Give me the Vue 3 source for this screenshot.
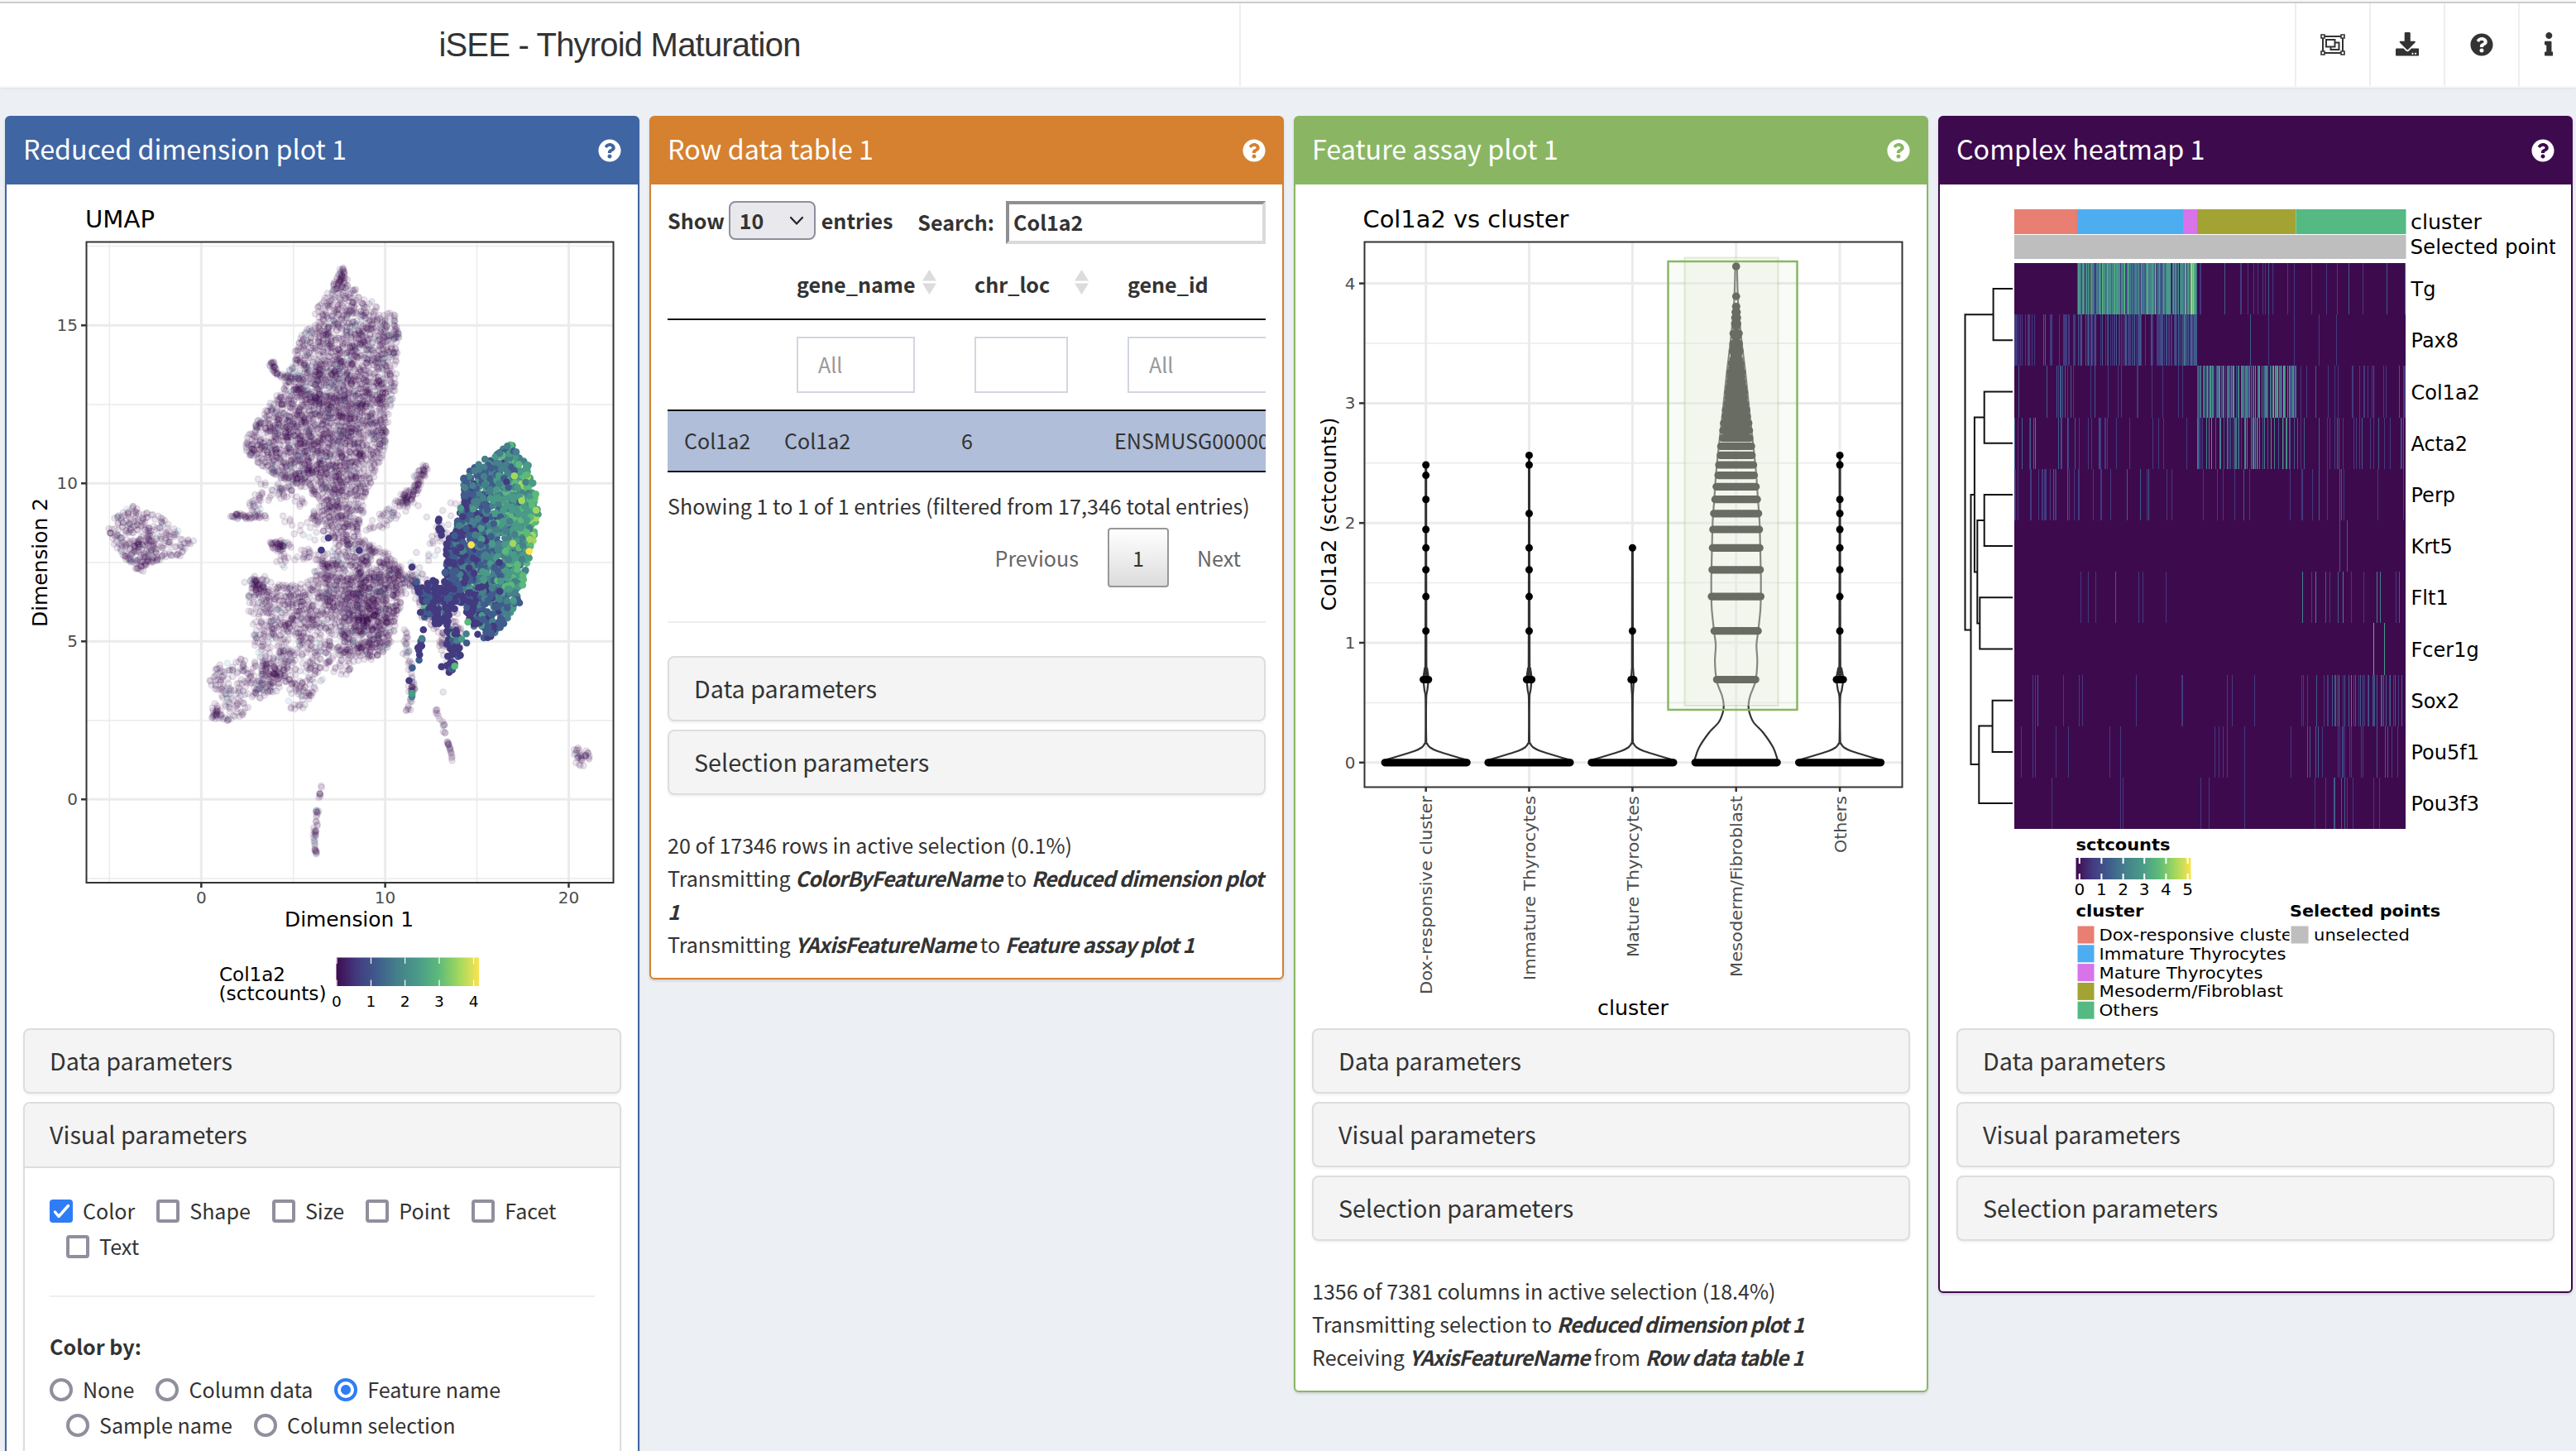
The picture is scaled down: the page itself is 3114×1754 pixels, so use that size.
<script setup>
// ---------- deterministic random source ----------
function rng(seed) {
  let s = seed >>> 0
  return () => {
    s = (s + 0x6d2b79f5) >>> 0
    let t = s
    t = Math.imul(t ^ (t >>> 15), t | 1)
    t ^= t + Math.imul(t ^ (t >>> 7), t | 61)
    return ((t ^ (t >>> 14)) >>> 0) / 4294967296
  }
}
const round = (v) => Math.round(v * 10) / 10
const viridis = ['#3f0b4f', '#433a80', '#3f5c8c', '#45808b', '#4a9a88', '#5bb97b', '#a0d75f', '#fae350']

// ---------- UMAP ----------
const r1 = rng(42)
const gauss = () => (r1() + r1() + r1() + r1() - 2) * 0.85
const toPage = (x, y) => [round(x / 2.0103), round(230 + y / 2.529)]
function inside(poly, x, y) {
  let hit = false
  for (let i = 0, j = poly.length - 1; i < poly.length; j = i++) {
    const [xi, yi] = poly[i]
    const [xj, yj] = poly[j]
    if (yi > y !== yj > y && x < ((xj - xi) * (y - yi)) / (yj - yi) + xi) hit = !hit
  }
  return hit
}
function fillPoly(poly, n) {
  const xs = poly.map((p) => p[0])
  const ys = poly.map((p) => p[1])
  const x0 = Math.min(...xs), x1 = Math.max(...xs)
  const y0 = Math.min(...ys), y1 = Math.max(...ys)
  const out = []
  while (out.length < n) {
    const x = x0 + r1() * (x1 - x0)
    const y = y0 + r1() * (y1 - y0)
    if (inside(poly, x, y)) out.push([x, y])
  }
  return out
}
function blob(cx, cy, sx, sy, n, poly) {
  const out = []
  let guard = 0
  while (out.length < n && guard++ < n * 20) {
    const x = cx + gauss() * sx
    const y = cy + gauss() * sy
    if (!poly || inside(poly, x, y)) out.push([x, y])
  }
  return out
}
function streak(pts, spread, n) {
  const out = []
  for (let i = 0; i < n; i++) {
    const t = r1() * (pts.length - 1)
    const k = Math.floor(t)
    const f = t - k
    out.push([
      pts[k][0] + (pts[k + 1][0] - pts[k][0]) * f + gauss() * spread,
      pts[k][1] + (pts[k + 1][1] - pts[k][1]) * f + gauss() * spread
    ])
  }
  return out
}
const upper = [[833, 244], [850, 285], [880, 318], [920, 355], [962, 380], [970, 450], [970, 530], [962, 610], [945, 690], [935, 790], [915, 860], [890, 930], [880, 985], [800, 975], [760, 930], [720, 900], [680, 880], [630, 840], [596, 800], [600, 750], [640, 680], [665, 635], [690, 600], [680, 575], [715, 530], [715, 480], [740, 430], [775, 400], [762, 370], [790, 320], [810, 285], [825, 250]]
const middle = [[820, 1080], [900, 1080], [945, 1110], [970, 1150], [980, 1200], [975, 1270], [960, 1340], [945, 1400], [910, 1435], [860, 1440], [845, 1485], [800, 1470], [770, 1520], [735, 1590], [700, 1590], [702, 1480], [660, 1530], [610, 1560], [640, 1450], [620, 1400], [610, 1320], [600, 1260], [610, 1190], [650, 1190], [700, 1210], [760, 1190], [770, 1130]]
const lowerLeft = [[525, 1450], [580, 1430], [640, 1440], [680, 1450], [700, 1480], [680, 1520], [640, 1550], [612, 1570], [605, 1605], [570, 1612], [552, 1632], [520, 1605], [514, 1590], [525, 1560], [505, 1500]]
const island = [[325, 965], [370, 985], [410, 1010], [440, 1050], [468, 1072], [440, 1120], [400, 1130], [365, 1140], [345, 1170], [310, 1140], [285, 1110], [262, 1035], [275, 990]]
const faintRaw = [
  ...fillPoly(upper, 2050),
  ...blob(760, 790, 230, 260, 560, upper),
  ...blob(840, 570, 210, 300, 480, upper),
  ...streak([[833, 240], [830, 265], [822, 300]], 8, 20),
  ...streak([[660, 522], [672, 560], [735, 575]], 8, 44),
  ...fillPoly([[770, 960], [885, 975], [870, 1050], [905, 1090], [820, 1090], [790, 1050], [750, 1000]], 180),
  ...fillPoly(middle, 1150),
  ...blob(905, 1310, 85, 150, 400, middle),
  ...blob(860, 1160, 150, 120, 220, middle),
  ...blob(730, 1260, 150, 160, 160, middle),
  ...fillPoly(lowerLeft, 200),
  ...blob(670, 1480, 50, 55, 60),
  ...blob(522, 1602, 12, 22, 14),
  ...fillPoly(island, 280),
  ...blob(342, 1115, 50, 70, 60, island),
  ...streak([[566, 991], [600, 1000], [645, 995]], 9, 44),
  ...streak([[600, 990], [630, 950], [665, 925], [710, 905]], 26, 45),
  ...streak([[640, 880], [690, 930], [750, 960]], 26, 22),
  ...streak([[670, 1010], [760, 1040], [800, 1000]], 34, 30),
  ...streak([[655, 1080], [700, 1085]], 12, 36),
  ...streak([[680, 1090], [690, 1145]], 16, 20),
  ...streak([[730, 1130], [780, 1100]], 28, 20),
  ...streak([[620, 1190], [640, 1240]], 26, 50),
  ...streak([[1034, 845], [1018, 885], [1000, 930]], 10, 54),
  ...streak([[1000, 930], [975, 960]], 22, 54),
  ...streak([[970, 965], [930, 1005], [890, 1040]], 28, 34),
  ...streak([[960, 1170], [1010, 1200], [1060, 1260]], 34, 100),
  ...streak([[1110, 940], [1080, 1020], [1050, 1090], [1010, 1160]], 30, 34),
  ...fillPoly([[1000, 1200], [1100, 1230], [1120, 1330], [1120, 1440], [1080, 1470], [1060, 1350], [1010, 1290]], 150),
  ...streak([[985, 1325], [987, 1400], [1003, 1510], [1000, 1540], [990, 1598]], 8, 60),
  ...streak([[1060, 1586], [1072, 1620], [1085, 1660]], 6, 15),
  ...streak([[1088, 1680], [1094, 1710], [1099, 1748]], 4, 17),
  ...streak([[781, 1817], [776, 1860]], 2, 8),
  ...streak([[770, 1892], [767, 1950], [764, 1990], [770, 2030]], 4, 38),
  ...streak([[1400, 1702], [1412, 1735], [1416, 1755]], 11, 22),
  ...blob(1425, 1725, 8, 18, 10),
  [470, 1072], [1077, 1534], [1037, 999]
]
const faint = faintRaw.map(([x, y]) => {
  const [px, py] = toPage(x, y)
  return { x: px, y: py, c: r1() < 0.045 ? '#3f7f95' : '#3f0b4f' }
})
const body = [[1245, 775], [1285, 840], [1298, 920], [1308, 990], [1295, 1080], [1288, 1130], [1278, 1200], [1265, 1260], [1235, 1310], [1190, 1378], [1150, 1350], [1130, 1290], [1080, 1235], [1080, 1160], [1085, 1080], [1110, 1010], [1125, 940], [1120, 880], [1160, 840], [1200, 800]]
const bold = []
for (const [x, y] of fillPoly(body, 1350)) {
  let v = ((x - 1100) / 190) * 3.3 + 1.3 + gauss() * 1.8
  if (y > 1220) v -= 0.9
  if (y < 870) v -= 0.4
  const i = Math.max(1, Math.min(6, Math.round(v)))
  const [px, py] = toPage(x, y)
  bold.push({ x: px, y: py, c: viridis[i] })
}
for (const [x, y] of [
  ...fillPoly([[1010, 1195], [1100, 1190], [1115, 1270], [1060, 1340], [1020, 1290]], 105),
  ...fillPoly([[1085, 1310], [1112, 1330], [1120, 1440], [1093, 1485], [1072, 1460], [1085, 1390]], 52),
  ...streak([[1030, 1340], [1022, 1400], [1010, 1455]], 5, 11),
  ...streak([[1065, 1000], [1070, 1060]], 8, 9)
]) {
  const [px, py] = toPage(x, y)
  const q = r1()
  bold.push({ x: px, y: py, c: viridis[q < 0.72 ? 1 : q < 0.9 ? 2 : q < 0.97 ? 3 : 5] })
}
for (const [x, y, i] of [[798, 1063, 1], [781, 1100, 1], [873, 1101, 1], [1001, 1152, 1], [1002, 1460, 2], [994, 1499, 1], [1001, 1548, 3], [1001, 1538, 4], [1250, 873, 6], [1303, 978, 6], [1145, 1084, 7], [1286, 1104, 7], [1133, 1356, 3], [1122, 1372, 4], [1134, 1384, 2], [1105, 1455, 5], [1137, 1320, 5], [1295, 895, 4], [1302, 929, 5]]) {
  const [px, py] = toPage(x, y)
  bold.push({ x: px, y: py, c: viridis[i] })
}
const umapV = [{ x: 132.3, m: 1 }, { x: 354.7, m: 1 }, { x: 576.5, m: 1 }, { x: 243.3, t: '0' }, { x: 465.6, t: '10' }, { x: 687.5, t: '20' }]
const umapH = [{ y: 297.6, m: 1 }, { y: 489, m: 1 }, { y: 680, m: 1 }, { y: 871, m: 1 }, { y: 1062, m: 1 }, { y: 393.3, t: '15' }, { y: 584.3, t: '10' }, { y: 775.3, t: '5' }, { y: 966.3, t: '0' }]
const umapKey = [407, 448.5, 489.6, 531, 572.6]

// ---------- violin plot ----------
const vy = (v) => round(921.8 - 144.8 * v)
const groups = [
  { x: 1723.7, name: 'Dox-responsive cluster', len: 240, bump: 3, dots: [1.099, 1.386, 1.609, 1.792, 1.946, 2.197, 2.398, 2.485] },
  { x: 1848.5, name: 'Immature Thyrocytes', len: 223, bump: 3, dots: [1.099, 1.386, 1.609, 1.792, 2.079, 2.485, 2.565] },
  { x: 1973.4, name: 'Mature Thyrocytes', len: 195, bump: 1.5, dots: [1.099, 1.792] },
  { x: 2098.7, name: 'Mesoderm/Fibroblast', len: 219 },
  { x: 2224.1, name: 'Others', len: 69, bump: 4, dots: [1.099, 1.386, 1.609, 1.792, 1.946, 2.079, 2.197, 2.485, 2.565] }
]
const thin = groups.filter((g) => g.dots)
function smooth(p) {
  let d = `M${p[0][0]},${p[0][1]}`
  for (let i = 0; i < p.length - 1; i++) {
    const a = p[i - 1] || p[i], b = p[i], c = p[i + 1], e = p[i + 2] || c
    d += `C${round(b[0] + (c[0] - a[0]) / 6)},${round(b[1] + (c[1] - a[1]) / 6)} ${round(c[0] - (e[0] - b[0]) / 6)},${round(c[1] - (e[1] - b[1]) / 6)} ${c[0]},${c[1]}`
  }
  return d
}
const thinProfile = (g) => [[49, 918.6], [30, 913], [14, 908], [5, 903.5], [1.5, 899], [0.4, 893], [0.4, 845], [g.bump * 0.6, 834], [g.bump, 820], [g.bump * 0.5, 808], [0.6, 795], [0.4, vy(g.dots[g.dots.length - 1])]]
const fatProfile = [[50, 918], [45, 904], [33, 886], [21, 873], [16, 861], [15, 852], [17, 841], [23.5, 823], [25.6, 800], [24.6, 780], [26.5, 764], [29.5, 735], [30, 704], [29.3, 668], [28.3, 630], [26.4, 604], [23.4, 563], [16.4, 500], [11.4, 452], [6.5, 411], [2.5, 367], [1, 322]]
const side = (g, prof, s) => smooth(prof.map(([dx, y]) => [round(g.x + s * dx), y]))
const fatRows = [[0.693, 28], [1.099, 31], [1.386, 34.3], [1.609, 33.5], [1.792, 33], [1.946, 32.5], [2.079, 31.5], [2.197, 30], [2.303, 28.5], [2.398, 26.3], [2.485, 25.4], [2.565, 23.6], [2.64, 23], [2.708, 20.8], [2.773, 20.4], [2.833, 19.6], [2.89, 17.8], [2.944, 17.2], [2.996, 15.6], [3.045, 14.2], [3.091, 14.4], [3.135, 13.2], [3.178, 12], [3.219, 11.2], [3.258, 11.8], [3.296, 9.6], [3.332, 10], [3.367, 8.2], [3.401, 7], [3.434, 9], [3.466, 7.4], [3.497, 8.2], [3.555, 6], [3.583, 8], [3.64, 5], [3.664, 6.2], [3.714, 6], [3.761, 5.6], [3.807, 5], [3.892, 4.8], [4.143, 4.8]]
const violinMajor = [0, 1, 2, 3, 4]
const violinMinor = [0.5, 1.5, 2.5, 3.5]

// ---------- heatmap ----------
const r2 = rng(7)
const segs = [
  { x: 2435, w: 76, c: '#e97e72', n: 'Dox-responsive cluster', len: 0 },
  { x: 2511, w: 128, c: '#4cadf1', n: 'Immature Thyrocytes', len: 224 },
  { x: 2639, w: 17, c: '#d873ea', n: 'Mature Thyrocytes', len: 196 },
  { x: 2656, w: 119.5, c: '#a3a333', n: 'Mesoderm/Fibroblast', len: 220.5 },
  { x: 2775.5, w: 133, c: '#54b982', n: 'Others', len: 70 }
]
// per gene: density of expressing cells and mean level in each cluster
const genes = [
  { n: 'Tg', d: [0, 0.97, 1, 0.11, 0.04], l: [0, 3, 4.2, 1.2, 1.4] },
  { n: 'Pax8', d: [0.4, 0.58, 0.85, 0.01, 0.03], l: [1, 1.4, 1.7, 1, 1] },
  { n: 'Col1a2', d: [0.07, 0.05, 0.05, 0.72, 0.09], l: [1.6, 1, 1, 2.9, 1.2] },
  { n: 'Acta2', d: [0.14, 0.07, 0.12, 0.4, 0.25], l: [1.7, 1, 1.2, 2.5, 1.9] },
  { n: 'Perp', d: [0.22, 0.1, 0.03, 0.04, 0.12], l: [1, 1.1, 1, 1, 1.2] },
  { n: 'Krt5', d: [0, 0, 0, 0, 0], l: [0, 0, 0, 0, 0], at: [[2828.5, 2], [2837.5, 2]] },
  { n: 'Flt1', d: [0.02, 0.04, 0.01, 0.01, 0.1], l: [1, 1, 1, 1, 1.8] },
  { n: 'Fcer1g', d: [0, 0, 0, 0, 0], l: [0, 0, 0, 0, 0], at: [[2869.5, 5], [2882.5, 4]] },
  { n: 'Sox2', d: [0.06, 0.01, 0.05, 0.03, 0.3], l: [1, 1, 1, 1, 1.5] },
  { n: 'Pou5f1', d: [0.05, 0.01, 0, 0.03, 0.11], l: [1, 1, 1, 1, 1.6] },
  { n: 'Pou3f3', d: [0.01, 0.01, 0, 0.02, 0.07], l: [1, 1, 1, 1, 1.3] }
]
const rowH = 62.2
const rowMid = (i) => round(318 + rowH * (i + 0.5))
const stripes = []
genes.forEach((g, gi) => {
  const byLevel = {}
  segs.forEach((s, si) => {
    for (let x = Math.round(s.x); x < Math.min(s.x + s.w, 2908); x++) {
      if (r2() > g.d[si]) continue
      const v = Math.max(1, Math.min(6, Math.round(g.l[si] + (r2() + r2() - 1) * g.l[si] * 0.85)))
      ;(byLevel[v] = byLevel[v] || []).push(x + 0.5)
    }
  })
  for (const [x, v] of g.at || []) (byLevel[v] = byLevel[v] || []).push(x)
  const y0 = Math.round(318 + gi * rowH), y1 = Math.round(318 + (gi + 1) * rowH)
  for (const v in byLevel) stripes.push({ c: viridis[v], d: byLevel[v].map((x) => `M${x},${y0}V${y1}`).join('') })
})
const R = rowMid
const tree = [
  `M2433,${R(0)}H2409.6V${R(1)}H2433`,
  `M2433,${R(2)}H2398.7V${R(3)}H2433`,
  `M2433,${R(4)}H2398.7V${R(5)}H2433`,
  `M2433,${R(6)}H2393.3V${R(7)}H2433`,
  `M2433,${R(8)}H2408.6V${R(9)}H2433`,
  `M2398.7,629H2390.3V753.6H2393.3`,
  `M2398.7,504.5H2386.9V691.5H2390.3`,
  `M2408.6,877.5H2392.3V${R(10)}H2433`,
  `M2386.9,598H2382.5V924H2392.3`,
  `M2409.6,380.3H2375.5V761.4H2382.5`
].join('')
const heatKey = [2513.8, 2540.4, 2566.6, 2592.2, 2618.4, 2644.6]

// ---------- controls ----------
const threeBoxes = ['Data parameters', 'Visual parameters', 'Selection parameters']
const checks = [['Color', 'Shape', 'Size', 'Point', 'Facet'], ['Text']]
const radios = [['None', 'Column data', 'Feature name'], ['Sample name', 'Column selection']]
const QUESTION = 'M504 256c0 136.997-111.043 248-248 248S8 392.997 8 256C8 119.083 119.043 8 256 8s248 111.083 248 248zM262.655 90c-54.497 0-89.255 22.957-116.549 63.758-3.536 5.286-2.353 12.415 2.715 16.258l34.699 26.31c5.205 3.947 12.621 3.008 16.665-2.122 17.864-22.658 30.113-35.797 57.303-35.797 20.429 0 45.698 13.148 45.698 32.958 0 14.976-12.363 22.667-32.534 33.976C247.128 238.528 216 254.941 216 296v4c0 6.627 5.373 12 12 12h56c6.627 0 12-5.373 12-12v-1.333c0-28.462 83.186-29.647 83.186-106.667 0-58.002-60.165-102-116.531-102zM256 338c-25.365 0-46 20.635-46 46 0 25.364 20.635 46 46 46s46-20.636 46-46c0-25.365-20.635-46-46-46z'
</script>

<template>
  <div class="app">
    <header class="top">
      <div class="brand">iSEE - Thyroid Maturation</div>
      <nav class="tools">
        <a class="tool">
          <svg width="30" height="26" viewBox="0 0 30 26" fill="none" stroke="#333" stroke-width="2">
            <path d="M3 3H27V23H3Z" />
            <path d="M7 7H17.500V15.500H7Z M18.500 10.500H22.500V19H12.500V16.500" />
            <path d="M1 1H5V5H1ZM25 1H29V5H25ZM1 21H5V25H1ZM25 21H29V25H25Z" fill="#fff" stroke-width="1.600" />
          </svg>
        </a>
        <a class="tool">
          <svg width="28.500" height="28.500" viewBox="0 0 512 512" fill="#333"><path d="M216 0h80c13.300 0 24 10.700 24 24v168h87.700c17.800 0 26.700 21.500 14.100 34.100L269.700 378.300c-7.500 7.500-19.800 7.500-27.300 0L90.100 226.100c-12.600-12.600-3.700-34.100 14.100-34.100H192V24c0-13.300 10.700-24 24-24zm296 376v112c0 13.300-10.700 24-24 24H24c-13.300 0-24-10.700-24-24V376c0-13.300 10.700-24 24-24h146.700l49 49c20.100 20.100 52.500 20.100 72.600 0l49-49H488c13.300 0 24 10.700 24 24zm-124 88c0-11-9-20-20-20s-20 9-20 20 9 20 20 20 20-9 20-20zm64 0c0-11-9-20-20-20s-20 9-20 20 9 20 20 20 20-9 20-20z" /></svg>
        </a>
        <a class="tool">
          <svg width="28" height="28" viewBox="0 0 512 512" fill="#333"><path :d="QUESTION" /></svg>
        </a>
        <a class="tool last">
          <svg width="10.700" height="28.500" viewBox="0 0 192 512" fill="#333"><path d="M20 424.229h20V279.771H20c-11.046 0-20-8.954-20-20V212c0-11.046 8.954-20 20-20h112c11.046 0 20 8.954 20 20v212.229h20c11.046 0 20 8.954 20 20V492c0 11.046-8.954 20-20 20H20c-11.046 0-20-8.954-20-20v-47.771c0-11.046 8.954-20 20-20zM96 0C56.235 0 24 32.235 24 72s32.235 72 72 72 72-32.235 72-72S135.764 0 96 0z" /></svg>
        </a>
      </nav>
    </header>

    <main class="grid">
      <!-- Reduced dimension plot -->
      <section class="panel blue">
        <div class="head"><span>Reduced dimension plot 1</span><svg width="28" height="28" viewBox="0 0 512 512" fill="#fff"><path :d="QUESTION" /></svg></div>
        <div class="body">
          <svg class="plot" width="723" height="1000" viewBox="28 243 723 1000">
            <defs>
              <linearGradient id="vir">
                <stop v-for="(c, i) in viridis" :key="i" :offset="i / 7" :stop-color="c" />
              </linearGradient>
            </defs>
            <text x="103" y="275" font-size="28" textLength="84" lengthAdjust="spacingAndGlyphs">UMAP</text>
            <g stroke="#ebebeb">
              <line v-for="g in umapV" :key="g.x" :x1="g.x" :x2="g.x" y1="292" y2="1067" :stroke-width="g.m ? 1.5 : 3" />
              <line v-for="g in umapH" :key="g.y" :y1="g.y" :y2="g.y" x1="104" x2="741" :stroke-width="g.m ? 1.5 : 3" />
            </g>
            <g fill-opacity="0.1" stroke-opacity="0.1" stroke-width="1.6">
              <circle v-for="(p, i) in faint" :key="i" :cx="p.x" :cy="p.y" r="3.6" :fill="p.c" :stroke="p.c" />
            </g>
            <circle v-for="(p, i) in bold" :key="'b' + i" :cx="p.x" :cy="p.y" r="4.3" :fill="p.c" />
            <rect x="104.500" y="292.500" width="637" height="774.500" fill="none" stroke="#333" stroke-width="2" />
            <g fill="#4d4d4d" font-size="20">
              <template v-for="g in umapV" :key="'t' + g.x">
                <line v-if="g.t" :x1="g.x" :x2="g.x" y1="1067" y2="1073" stroke="#333" stroke-width="2.500" />
                <text v-if="g.t" :x="g.x" y="1092" text-anchor="middle">{{ g.t }}</text>
              </template>
              <template v-for="g in umapH" :key="'t' + g.y">
                <line v-if="g.t" :y1="g.y" :y2="g.y" x1="98" x2="104" stroke="#333" stroke-width="2.500" />
                <text v-if="g.t" x="94" :y="g.y + 7" text-anchor="end">{{ g.t }}</text>
              </template>
            </g>
            <text x="422" y="1120" font-size="24" text-anchor="middle" textLength="156" lengthAdjust="spacingAndGlyphs">Dimension 1</text>
            <text transform="translate(56.500 680) rotate(-90)" font-size="24" text-anchor="middle" textLength="156" lengthAdjust="spacingAndGlyphs">Dimension 2</text>
            <text x="265" y="1186" font-size="23" textLength="80" lengthAdjust="spacingAndGlyphs">Col1a2</text>
            <text x="264.500" y="1209" font-size="23" textLength="130" lengthAdjust="spacingAndGlyphs">(sctcounts)</text>
            <rect x="406.500" y="1157.500" width="172.500" height="34.500" fill="url(#vir)" />
            <g v-for="(x, i) in umapKey" :key="x">
              <path :d="`M${x},1157.500v7.500M${x},1192v-7.500`" stroke="#fff" stroke-width="1.200" />
              <text :x="x" y="1216.500" font-size="18.500" text-anchor="middle">{{ i }}</text>
            </g>
          </svg>
          <div class="box"><div class="bar">Data parameters</div></div>
          <div class="box open">
            <div class="bar">Visual parameters</div>
            <div class="form">
              <div v-for="(row, i) in checks" :key="i" class="opts" :class="{ wrap: i }">
                <label v-for="c in row" :key="c" class="opt">
                  <span class="check" :class="{ on: c === 'Color' }"><svg v-if="c === 'Color'" width="28" height="28" viewBox="0 0 28 28"><path d="M6.500 15L11 20.500L22.500 7.500" fill="none" stroke="#fff" stroke-width="3.400" stroke-linecap="round" stroke-linejoin="round" /></svg></span>{{ c }}
                </label>
              </div>
              <hr />
              <div class="by">Color by:</div>
              <div v-for="(row, i) in radios" :key="'r' + i" class="opts" :class="{ wrap: i }">
                <label v-for="c in row" :key="c" class="opt">
                  <span class="radio" :class="{ on: c === 'Feature name' }"></span>{{ c }}
                </label>
              </div>
            </div>
          </div>
        </div>
      </section>

      <!-- Row data table -->
      <section class="panel orange">
        <div class="head"><span>Row data table 1</span><svg width="28" height="28" viewBox="0 0 512 512" fill="#fff"><path :d="QUESTION" /></svg></div>
        <div class="body">
          <div class="controls">
            <span>Show</span>
            <span class="select">10<svg width="18" height="12" viewBox="0 0 18 12" fill="none" stroke="#222" stroke-width="2.200" stroke-linecap="round"><path d="M2 2L9 9.500L16 2" /></svg></span>
            <span>entries</span>
            <span class="search">Search:</span>
            <span class="input">Col1a2</span>
          </div>
          <div class="table">
            <div class="tr th">
              <div class="c0"></div>
              <div class="c1">gene_name<svg class="sort" width="17" height="30" viewBox="0 0 17 30" fill="#dcdcdc"><path d="M8.500 0L17 13.500H0ZM0 16.500H17L8.500 30Z" /></svg></div>
              <div class="c2">chr_loc<svg class="sort" width="17" height="30" viewBox="0 0 17 30" fill="#dcdcdc"><path d="M8.500 0L17 13.500H0ZM0 16.500H17L8.500 30Z" /></svg></div>
              <div class="c3">gene_id</div>
            </div>
            <div class="tr filters">
              <div class="c0"></div>
              <div class="c1"><span class="filter f1">All</span></div>
              <div class="c2"><span class="filter f2"></span></div>
              <div class="c3"><span class="filter f3">All</span></div>
            </div>
            <div class="tr data">
              <div class="d0">Col1a2</div>
              <div class="d1">Col1a2</div>
              <div class="d2">6</div>
              <div class="d3">ENSMUSG00000</div>
            </div>
          </div>
          <div class="showing">Showing 1 to 1 of 1 entries (filtered from 17,346 total entries)</div>
          <div class="pager"><span>Previous</span><b class="page">1</b><span>Next</span></div>
          <hr class="rule" />
          <div class="box"><div class="bar">Data parameters</div></div>
          <div class="box"><div class="bar">Selection parameters</div></div>
          <div class="info">
            20 of 17346 rows in active selection (0.1%)<br />
            Transmitting <b><i>ColorByFeatureName</i></b> to <b><i>Reduced dimension plot<br />1</i></b><br />
            Transmitting <b><i>YAxisFeatureName</i></b> to <b><i>Feature assay plot 1</i></b>
          </div>
        </div>
      </section>

      <!-- Feature assay plot -->
      <section class="panel green">
        <div class="head"><span>Feature assay plot 1</span><svg width="28" height="28" viewBox="0 0 512 512" fill="#fff"><path :d="QUESTION" /></svg></div>
        <div class="body">
          <svg class="plot" width="723" height="1000" viewBox="1586 243 723 1000">
            <text x="1647.500" y="275" font-size="28" textLength="249" lengthAdjust="spacingAndGlyphs">Col1a2 vs cluster</text>
            <g stroke="#ebebeb" stroke-width="3">
              <line v-for="g in groups" :key="g.x" :x1="g.x" :x2="g.x" y1="292" y2="951" />
              <line v-for="v in violinMajor" :key="v" x1="1649" x2="2299" :y1="vy(v)" :y2="vy(v)" />
              <line v-for="v in violinMinor" :key="v" x1="1649" x2="2299" :y1="vy(v)" :y2="vy(v)" stroke-width="1.500" />
            </g>
            <g fill="none" stroke="#333" stroke-width="2.200">
              <template v-for="g in thin" :key="g.x">
                <path :d="side(g, thinProfile(g), 1)" />
                <path :d="side(g, thinProfile(g), -1)" />
              </template>
              <path :d="side(groups[3], fatProfile, 1)" />
              <path :d="side(groups[3], fatProfile, -1)" />
            </g>
            <g stroke="#000" stroke-width="9.200" stroke-linecap="round">
              <line v-for="g in groups" :key="g.x" :x1="g.x - 49.500" :x2="g.x + 49.500" :y1="vy(0)" :y2="vy(0)" />
              <template v-for="g in thin" :key="'d' + g.x">
                <line :x1="g.x - g.bump" :x2="g.x + g.bump" :y1="vy(0.693)" :y2="vy(0.693)" />
                <circle v-for="v in g.dots" :key="v" :cx="g.x" :cy="vy(v)" r="4.500" stroke="none" />
              </template>
              <line v-for="r in fatRows" :key="r[0]" :x1="groups[3].x - r[1] + 4.600" :x2="groups[3].x + r[1] - 4.500" :y1="vy(r[0])" :y2="vy(r[0])" />
            </g>
            <rect x="1649.500" y="292.500" width="650" height="659" fill="none" stroke="#333" stroke-width="2" />
            <rect x="2036.500" y="311.500" width="113" height="541.500" fill="#eff4e8" fill-opacity="0.430" stroke="#8ab663" stroke-opacity="0.250" stroke-width="2" />
            <rect x="2016.500" y="316" width="156" height="542" fill="#8ab663" fill-opacity="0.050" stroke="#8ab663" stroke-width="2.500" />
            <g fill="#4d4d4d" font-size="20">
              <template v-for="v in violinMajor" :key="'l' + v">
                <line x1="1643" x2="1649" :y1="vy(v)" :y2="vy(v)" stroke="#333" stroke-width="2.500" />
                <text x="1638.500" :y="vy(v) + 7" text-anchor="end">{{ v }}</text>
              </template>
              <template v-for="g in groups" :key="'n' + g.x">
                <line :x1="g.x" :x2="g.x" y1="951" y2="957" stroke="#333" stroke-width="2.500" />
                <text :transform="`translate(${g.x + 7.500} 962) rotate(-90)`" text-anchor="end" :textLength="g.len" lengthAdjust="spacingAndGlyphs">{{ g.name }}</text>
              </template>
            </g>
            <text transform="translate(1614.500 621.500) rotate(-90)" font-size="24" text-anchor="middle" textLength="234" lengthAdjust="spacingAndGlyphs">Col1a2 (sctcounts)</text>
            <text x="1974" y="1226.500" font-size="24" text-anchor="middle" textLength="86" lengthAdjust="spacingAndGlyphs">cluster</text>
          </svg>
          <div v-for="b in threeBoxes" :key="b" class="box"><div class="bar">{{ b }}</div></div>
          <div class="info">
            1356 of 7381 columns in active selection (18.4%)<br />
            Transmitting selection to <b><i>Reduced dimension plot 1</i></b><br />
            Receiving <b><i>YAxisFeatureName</i></b> from <b><i>Row data table 1</i></b>
          </div>
        </div>
      </section>

      <!-- Complex heatmap -->
      <section class="panel purple">
        <div class="head"><span>Complex heatmap 1</span><svg width="28" height="28" viewBox="0 0 512 512" fill="#fff"><path :d="QUESTION" /></svg></div>
        <div class="body">
          <svg class="plot" width="724" height="1000" viewBox="2365 243 724 1000">
            <rect v-for="s in segs" :key="s.x" :x="s.x" y="253" :width="s.w" height="30" :fill="s.c" />
            <rect x="2435" y="284" width="473.500" height="29" fill="#bebebe" />
            <text x="2914" y="276.500" font-size="24" textLength="86" lengthAdjust="spacingAndGlyphs">cluster</text>
            <text x="2913.500" y="306.500" font-size="24" textLength="190" lengthAdjust="spacingAndGlyphs">Selected points</text>
            <rect x="2435" y="318" width="473" height="684" fill="#3e0a4e" />
            <path v-for="(s, i) in stripes" :key="i" :d="s.d" :stroke="s.c" stroke-width="1" shape-rendering="crispEdges" />
            <text v-for="(g, i) in genes" :key="g.n" x="2914.500" :y="R(i) + 9" font-size="24">{{ g.n }}</text>
            <path :d="tree" fill="none" stroke="#111" stroke-width="2" />
            <g font-weight="bold" font-size="20">
              <text x="2509.500" y="1027.500" textLength="114" lengthAdjust="spacingAndGlyphs">sctcounts</text>
              <text x="2509.500" y="1108" textLength="82" lengthAdjust="spacingAndGlyphs">cluster</text>
              <text x="2768" y="1108" textLength="182" lengthAdjust="spacingAndGlyphs">Selected points</text>
            </g>
            <rect x="2509.500" y="1037" width="139" height="26" fill="url(#vir)" />
            <g v-for="(x, i) in heatKey" :key="x">
              <path :d="`M${x},1037v7M${x},1063v-7`" stroke="#fff" stroke-width="2" />
              <text :x="x" y="1082" font-size="20" text-anchor="middle">{{ i }}</text>
            </g>
            <g font-size="20">
              <g v-for="(s, i) in segs" :key="'k' + s.n">
                <rect x="2511.500" :y="1119.500 + i * 22.800" width="20" height="21" :fill="s.c" />
                <text v-if="s.len" x="2537.500" :y="1137 + i * 22.800" :textLength="s.len + 2" lengthAdjust="spacingAndGlyphs">{{ s.n }}</text>
                <text v-else x="2537.500" y="1137" textLength="242" lengthAdjust="spacingAndGlyphs">{{ s.n }}</text>
              </g>
              <rect x="2767.500" y="1116" width="30" height="30" fill="#fff" />
              <rect x="2769.500" y="1119.500" width="21" height="21" fill="#bebebe" />
              <text x="2797" y="1137" textLength="116" lengthAdjust="spacingAndGlyphs">unselected</text>
            </g>
          </svg>
          <div v-for="b in threeBoxes" :key="b" class="box"><div class="bar">{{ b }}</div></div>
        </div>
      </section>
    </main>
  </div>
</template>

<style>
body {
  margin: 0;
  overflow: hidden;
}
</style>

<style scoped>
.app {
  width: 3114px;
  height: 1754px;
  overflow: hidden;
  background: #ecf0f5;
  color: #333;
  font: 25.07px/40px "Noto Sans CJK SC", "Open Sans", sans-serif;
  white-space: nowrap;
}
.app * {
  box-sizing: border-box;
}
.top {
  display: flex;
  justify-content: space-between;
  height: 102px;
  margin-top: 2px;
  background: #fff;
  border-top: 2px solid #ccc;
  outline: 2px solid #f7f7f7;
  box-shadow: 0 2px 4px rgba(0, 0, 0, 0.1);
}
.brand {
  width: 1500px;
  border-right: 2px solid #eee;
  text-align: center;
  font: 300 40px/101px "Liberation Sans", Arial, sans-serif;
  letter-spacing: -0.8px;
}
.tools {
  display: flex;
  width: 340px;
}
.tool {
  flex: none;
  width: 90px;
  border-left: 2px solid #eee;
  display: flex;
  align-items: center;
  justify-content: center;
  padding-bottom: 1px;
}
.tool.last {
  width: 72px;
}
.grid {
  display: flex;
  align-items: flex-start;
  gap: 12px;
  width: 3116px;
  padding: 36px 6px 0;
}
.panel {
  flex: none;
  width: 767px;
  border: 2px solid;
  border-radius: 6px;
  background: #fff;
  box-shadow: 0 2px 3px rgba(0, 0, 0, 0.12);
}
.blue { border-color: #4065a3; height: 1700px; }
.orange { border-color: #d58130; height: 1044px; }
.green { border-color: #8ab663; height: 1543px; }
.purple { border-color: #3e0a4e; height: 1423px; }
.blue .head { background: #4065a3; }
.orange .head { background: #d58130; }
.green .head { background: #8ab663; }
.purple .head { background: #3e0a4e; }
.head {
  height: 81px;
  padding: 0 20px;
  display: flex;
  align-items: center;
  justify-content: space-between;
  color: #fff;
  font-size: 32.3px;
}
.head span {
  margin-top: -7px;
}
.head svg {
  margin-top: -1px;
}
.body {
  padding: 20px 20px 0;
}
.plot {
  display: block;
  font-family: "DejaVu Sans", sans-serif;
}
.box {
  height: 79px;
  margin-bottom: 10.2px;
  border: 2px solid #ddd;
  border-radius: 8px;
  background: #f4f4f4;
  box-shadow: 0 2px 3px rgba(0, 0, 0, 0.06);
}
.bar {
  height: 77px;
  padding-left: 30px;
  font-size: 28.7px;
  line-height: 74px;
}
.open {
  height: 500px;
  background: #fff;
}
.open .bar {
  background: #f4f4f4;
  border-bottom: 2px solid #ddd;
  border-radius: 6px 6px 0 0;
  height: 78px;
}
.form {
  padding: 29px 30px 0;
}
.opts {
  display: flex;
  gap: 26px;
  height: 43.5px;
  align-items: center;
}
.opts.wrap {
  padding-left: 20px;
}
.opt {
  display: flex;
  align-items: center;
  gap: 12px;
}
.check,
.radio {
  width: 28px;
  height: 28px;
  border: 4px solid #8f8f9d;
  border-radius: 4px;
  background: #fff;
  margin-top: 2px;
}
.radio {
  border-radius: 50%;
}
.check.on {
  border: 0;
  background: #2f7cf6;
}
.check svg {
  display: block;
}
.radio.on {
  border-color: #2f7cf6;
  background: radial-gradient(circle, #2f7cf6 0 5.5px, #fff 6.5px);
}
hr {
  border: 0;
  height: 2px;
  background: #eee;
  margin: 38px 0 39px;
}
.by {
  font-weight: bold;
  margin-bottom: 10px;
}
.controls {
  display: flex;
  height: 52px;
  font-weight: bold;
}
.controls > span {
  line-height: 47px;
}
.controls .select {
  width: 105px;
  height: 47px;
  margin: 0 7px 0 5px;
  padding: 0 12px 0 11px;
  border: 2px solid #8f8f9d;
  border-radius: 8px;
  background: #e9e9ed;
  line-height: 43px;
  display: flex;
  align-items: center;
  justify-content: space-between;
}
.controls .search {
  margin-left: auto;
  line-height: 51px;
  margin-right: 14px;
}
.controls .input {
  width: 314px;
  height: 52px;
  border: 4px solid;
  border-color: #8f8f8f #dadada #dadada #8f8f8f;
  padding-left: 5px;
  line-height: 43px;
}
.table {
  width: 723px;
  overflow: hidden;
}
.tr {
  display: flex;
}
.tr > div {
  flex: none;
}
.th {
  height: 92px;
  border-bottom: 2px solid #111;
  font-weight: bold;
  line-height: 97px;
}
.th > div {
  padding-top: 6px;
}
.c0 { width: 156px; }
.c1 { width: 215px; display: flex; align-items: center; }
.c2 { width: 185px; display: flex; align-items: center; }
.c3 { width: 240px; display: flex; align-items: center; }
.sort {
  margin-left: 9px;
  margin-top: -4px;
}
.c2 .sort {
  margin-left: auto;
  margin-right: 47px;
}
.filters {
  height: 108px;
}
.filter {
  height: 68px;
  border: 2px solid #d2d6de;
  padding-left: 24px;
  color: #999;
  line-height: 63px;
}
.f1 { width: 143px; }
.f2 { width: 113px; }
.f3 { width: 240px; }
.data {
  height: 76px;
  border-top: 2px solid #111;
  border-bottom: 2px solid #111;
  background: #b0bed9;
  line-height: 70px;
  padding-left: 20px;
}
.d0 { width: 121px; }
.d1 { width: 214px; }
.d2 { width: 185px; }
.showing {
  margin-top: 20px;
  letter-spacing: 0.03px;
}
.pager {
  margin-top: 7px;
  height: 72px;
  display: flex;
  justify-content: flex-end;
  align-items: center;
  color: #666;
  line-height: 68px;
  padding-right: 30px;
}
.page {
  width: 74px;
  height: 72px;
  margin: 0 34px 0 35px;
  border: 2px solid #979797;
  border-radius: 4px;
  background: linear-gradient(#fff, #dcdcdc);
  color: #333;
  text-align: center;
  font-weight: normal;
}
.rule {
  margin: 41px 0 40px;
}
.info {
  margin-top: 40px;
}
.info i {
  letter-spacing: -0.8px;
}
</style>
